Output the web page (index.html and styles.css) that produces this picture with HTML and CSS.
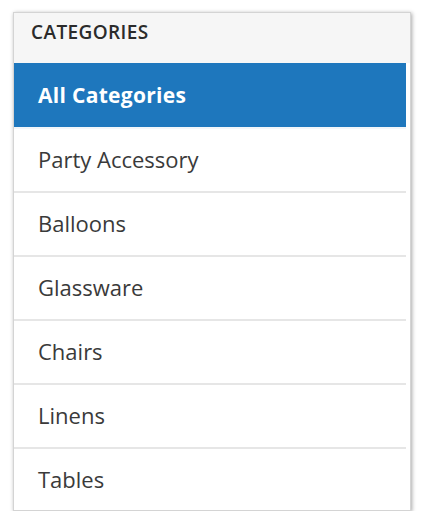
FILE: index.html
```html
<!DOCTYPE html>
<html>
<head>
<meta charset="utf-8">
<link rel="stylesheet" href="styles.css">
</head>
<body>
<div class="card">
  <div class="card-header">CATEGORIES</div>
  <ul class="cat-list">
    <li class="cat-item active">All Categories</li>
    <li class="cat-item">Party Accessory</li>
    <li class="cat-item">Balloons</li>
    <li class="cat-item">Glassware</li>
    <li class="cat-item">Chairs</li>
    <li class="cat-item">Linens</li>
    <li class="cat-item">Tables</li>
  </ul>
</div>
</body>
</html>
```

FILE: styles.css
```css
html, body {
  margin: 0;
  padding: 0;
  background: #ffffff;
}
body {
  font-family: "Open Sans", "Noto Sans", sans-serif;
  color: #333333;
}
.card {
  margin: 12px 0 0 13px;
  width: 396px;
  height: 497px;
  border: 1px solid #d4d4d4;
  background: #ffffff;
  box-shadow: 1px 1px 4px rgba(0, 0, 0, 0.35);
  overflow: hidden;
}
.card-header {
  height: 50px;
  background: #f6f6f6;
  font-size: 19px;
  font-weight: 600;
  letter-spacing: 0.4px;
  line-height: 39px;
  padding-left: 17px;
  color: #2b2b2b;
}
.cat-list {
  list-style: none;
  margin: 0 4px 0 0;
  padding: 0;
}
.cat-item {
  height: 62px;
  border-bottom: 2px solid #e6e6e6;
  font-size: 22px;
  line-height: 61px;
  padding-left: 24px;
  color: #3a3a3a;
}
.cat-item.active {
  height: 64px;
  line-height: 64px;
  background: #1e77bd;
  color: #ffffff;
  font-weight: 700;
  font-size: 21px;
  letter-spacing: 0.3px;
  border-bottom: 2px solid #f2f6fa;
}
.cat-item:last-child {
  border-bottom: none;
}
```
